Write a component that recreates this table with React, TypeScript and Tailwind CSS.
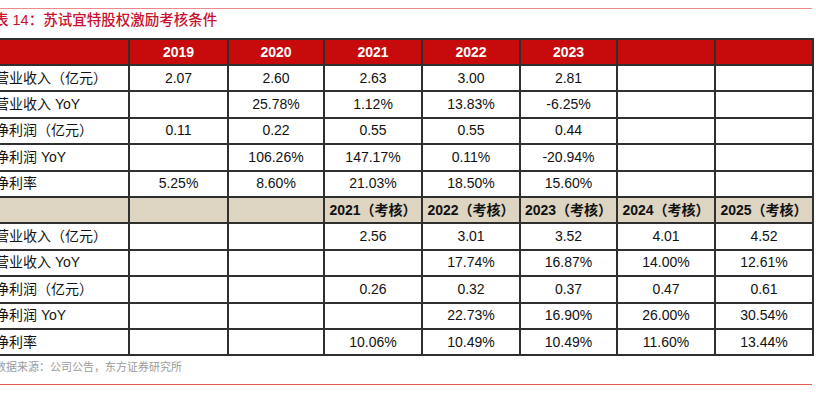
const top = [
  ['营业收入（亿元）', '2.07', '2.60', '2.63', '3.00', '2.81', '', ''],
  ['营业收入 YoY', '', '25.78%', '1.12%', '13.83%', '-6.25%', '', ''],
  ['净利润（亿元）', '0.11', '0.22', '0.55', '0.55', '0.44', '', ''],
  ['净利润 YoY', '', '106.26%', '147.17%', '0.11%', '-20.94%', '', ''],
  ['净利率', '5.25%', '8.60%', '21.03%', '18.50%', '15.60%', '', ''],
];

const bottom = [
  ['营业收入（亿元）', '', '', '2.56', '3.01', '3.52', '4.01', '4.52'],
  ['营业收入 YoY', '', '', '', '17.74%', '16.87%', '14.00%', '12.61%'],
  ['净利润（亿元）', '', '', '0.26', '0.32', '0.37', '0.47', '0.61'],
  ['净利润 YoY', '', '', '', '22.73%', '16.90%', '26.00%', '30.54%'],
  ['净利率', '', '', '10.06%', '10.49%', '10.49%', '11.60%', '13.44%'],
];

const years = ['2019', '2020', '2021', '2022', '2023', '', ''];
const targets = ['', '', '2021（考核）', '2022（考核）', '2023（考核）', '2024（考核）', '2025（考核）'];

const cell = 'border-2 border-[#2f2f2f] p-0 text-center whitespace-nowrap';

function DataRow({ row }: { row: string[] }) {
  return (
    <tr className="h-[26.4px]">
      <td className={cell + ' text-left pl-[3px]'}>{row[0]}</td>
      {row.slice(1).map((v, i) => (
        <td key={i} className={cell}>{v}</td>
      ))}
    </tr>
  );
}

export default function App() {
  return (
    <div className="w-[816px] h-[404px] bg-white overflow-hidden font-['Liberation_Sans','Noto_Sans_CJK_SC',sans-serif] text-[#111]">
      <div className="-ml-[10px] w-[822px] pt-2">
        <div className="ml-[10px] w-[812px] h-px bg-[#f08a8a]" />
        <div className="h-[23px] flex items-center pl-[4px] text-[14.5px] font-medium text-[#c8102e]">表 14：苏试宜特股权激励考核条件</div>
        <table className="mt-[6px] border-collapse table-fixed w-[822px] text-[14px]">
          <colgroup>
            <col className="w-[138px]" />
            <col className="w-[99px]" />
            <col className="w-[96px]" />
            <col className="w-[98px]" />
            <col className="w-[98px]" />
            <col className="w-[97px]" />
            <col className="w-[98px]" />
            <col className="w-[98px]" />
          </colgroup>
          <tbody>
            <tr className="h-[26px] bg-[#c70a0c] text-white font-bold">
              <td className={cell} />
              {years.map((y, i) => (
                <td key={i} className={cell}>{y}</td>
              ))}
            </tr>
            {top.map((r, i) => (
              <DataRow key={i} row={r} />
            ))}
            <tr className="h-[26.4px] bg-[#ddd4c2] font-bold">
              <td className={cell} />
              {targets.map((t, i) => (
                <td key={i} className={cell}>{t}</td>
              ))}
            </tr>
            {bottom.map((r, i) => (
              <DataRow key={i} row={r} />
            ))}
          </tbody>
        </table>
        <div className="h-[22px] flex items-center pl-[5px] text-[11px] text-[#9a9a9a]">数据来源：公司公告，东方证券研究所</div>
        <div className="mt-[6px] ml-[10px] w-[812px] h-px bg-[#e35a52]" />
      </div>
    </div>
  );
}
